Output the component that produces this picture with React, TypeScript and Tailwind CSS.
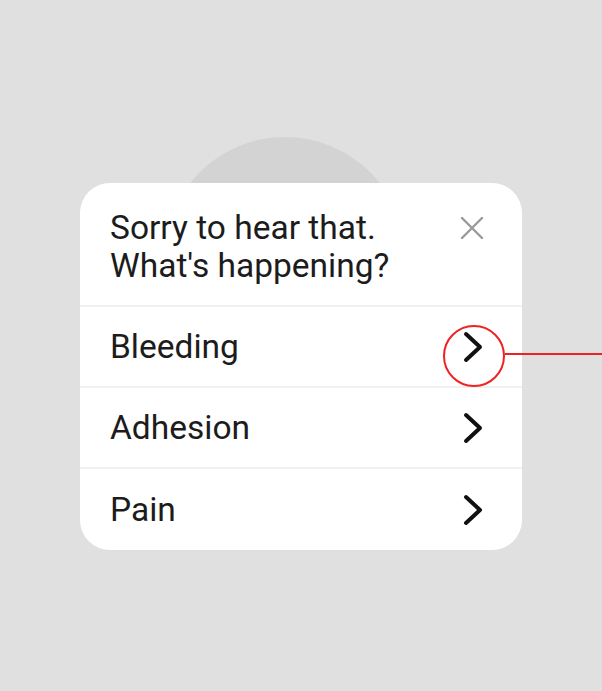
import React from "react";

function Chevron() {
  return (
    <svg width="22" height="32" viewBox="0 0 22 32" className="block">
      <path d="M4 3 L18 16 L4 29" fill="none" stroke="#111" strokeWidth="4" strokeLinecap="round" strokeLinejoin="round" />
    </svg>
  );
}

function Row({ label, last }: { label: string; last?: boolean }) {
  return (
    <div className={`flex h-[81px] items-center justify-between pl-[30px] pr-[38px] ${last ? "" : "border-b-2 border-[#f1f1f1]"}`}>
      <span className="text-[33.5px] leading-none text-[#1c1c1c]">{label}</span>
      <Chevron />
    </div>
  );
}

export default function App() {
  return (
    <div
      className="relative h-[691px] w-[602px] overflow-hidden bg-[#e0e0e0] pl-[80px] pt-[183px]"
      style={{ fontFamily: "Roboto, 'Noto Sans', sans-serif" }}
    >
      <div className="absolute left-[164px] top-[137px] h-[242px] w-[242px] rounded-full bg-[#d3d3d3]" />
      <div className="relative w-[442px] overflow-hidden rounded-[30px] bg-white">
        <div className="flex items-start justify-between border-b-2 border-[#f1f1f1] pb-[20px] pl-[30px] pr-[38px] pt-[26px]">
          <div className="text-[33.5px] leading-[38px] text-[#1c1c1c]">
            Sorry to hear that.
            <br />
            What's happening?
          </div>
          <svg width="24" height="24" viewBox="0 0 24 24" className="mt-[7px]">
            <path d="M2 2 L22 22 M22 2 L2 22" stroke="#9a9a9a" strokeWidth="2.4" strokeLinecap="round" />
          </svg>
        </div>
        <Row label="Bleeding" />
        <Row label="Adhesion" />
        <Row label="Pain" last />
      </div>
      <div className="absolute left-[443px] top-[325px] h-[62px] w-[62px] rounded-full border-2 border-[#ee2222]" />
      <div className="absolute left-[505px] top-[353px] h-[2px] w-[97px] bg-[#ee2222]" />
    </div>
  );
}
